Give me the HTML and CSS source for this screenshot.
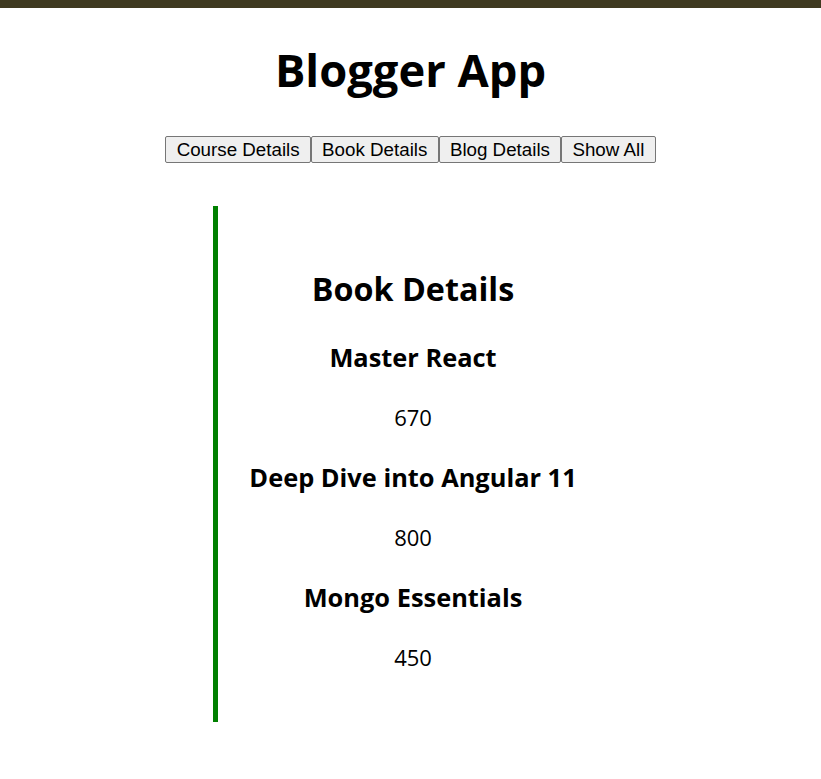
FILE: index.html
```html
<!DOCTYPE html>
<html lang="en">
<head>
<meta charset="utf-8">
<title>Blogger App</title>
<link rel="stylesheet" href="styles.css">
</head>
<body>
<div class="topbar"></div>
<h1 class="title">Blogger App</h1>
<nav class="nav">
  <button class="btn">Course Details</button><button class="btn">Book Details</button><button class="btn">Blog Details</button><button class="btn">Show All</button>
</nav>
<section class="panel">
  <h2 class="panel-title">Book Details</h2>
  <h3 class="book-name">Master React</h3>
  <p class="book-price">670</p>
  <h3 class="book-name">Deep Dive into Angular 11</h3>
  <p class="book-price">800</p>
  <h3 class="book-name">Mongo Essentials</h3>
  <p class="book-price">450</p>
</section>
</body>
</html>
```
FILE: styles.css
```css
html, body {
  margin: 0;
  padding: 0;
  background: #ffffff;
}
body {
  font-family: "Open Sans", "Noto Sans", sans-serif;
  color: #000;
}
.topbar {
  height: 8px;
  background: #3f3a21;
}
.title {
  margin: 32px 0 0;
  font-size: 45.3px;
  line-height: 60px;
  font-weight: 700;
  text-align: center;
}
.nav {
  display: flex;
  justify-content: center;
  margin-top: 36px;
}
.btn {
  font-family: "Liberation Sans", Arial, sans-serif;
  font-size: 18.75px;
  line-height: 23px;
  padding: 1px 10.25px;
  margin: 0;
  border: 1px solid #767676;
  border-radius: 2px;
  background: #efefef;
  color: #000;
}
.panel {
  width: 390px;
  margin: 43px auto 0;
  border-left: 5px solid #008000;
  padding: 60px 0 50px;
  text-align: center;
}
.panel-title {
  margin: 0 0 29px;
  font-size: 32.3px;
  line-height: 44px;
  font-weight: 700;
}
.book-name {
  margin: 27px 0;
  font-size: 25.4px;
  line-height: 36px;
  font-weight: 700;
}
.book-price {
  margin: 27px 0;
  font-size: 22px;
  line-height: 30px;
}
.book-price:last-child {
  margin-bottom: 0;
}
```
